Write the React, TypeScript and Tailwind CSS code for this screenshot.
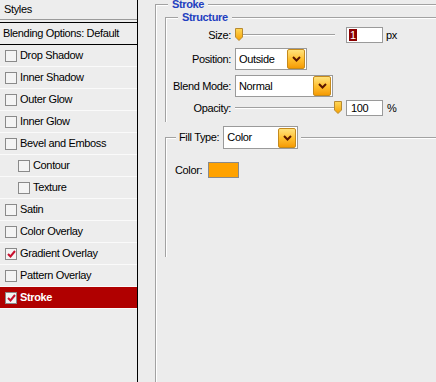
import { FC, ReactNode } from "react";

const font = { fontFamily: '"Liberation Sans", Arial, sans-serif' };

interface Row {
	label: string;
	checked?: boolean;
	indent?: boolean;
	active?: boolean;
}

const rows: Row[] = [
	{ label: "Drop Shadow" },
	{ label: "Inner Shadow" },
	{ label: "Outer Glow" },
	{ label: "Inner Glow" },
	{ label: "Bevel and Emboss" },
	{ label: "Contour", indent: true },
	{ label: "Texture", indent: true },
	{ label: "Satin" },
	{ label: "Color Overlay" },
	{ label: "Gradient Overlay", checked: true },
	{ label: "Pattern Overlay" },
	{ label: "Stroke", checked: true, active: true },
];

const Check: FC<{ checked?: boolean }> = ({ checked }) => (
	<span className="w-[12px] h-[12px] border border-[#8a8a8a] bg-[#f4f4f4] flex items-center justify-center shrink-0">
		{checked && (
			<svg width="9" height="8" viewBox="0 0 9 8">
				<path d="M1 4 L3.5 6.5 L8 1" stroke="#c8102e" strokeWidth="2" fill="none" />
			</svg>
		)}
	</span>
);

const Chevron: FC = () => (
	<span className="w-[18px] h-[20px] rounded-[2px] border border-[#c58a1c] bg-gradient-to-b from-[#ffe27a] via-[#ffc12e] to-[#f59b00] flex items-center justify-center shrink-0">
		<svg width="9" height="6" viewBox="0 0 9 6">
			<path d="M1 1 L4.5 4.5 L8 1" stroke="#5a1600" strokeWidth="2" fill="none" />
		</svg>
	</span>
);

const Select: FC<{ value: string; width: string; height?: string }> = ({ value, width, height = "h-[22px]" }) => (
	<div className={width + " " + height + " bg-white border border-[#9a9a9a] flex items-center justify-between pl-[3px] pr-[1px]"}>
		<span className="text-[11px] text-black">{value}</span>
		<Chevron />
	</div>
);

const Thumb: FC = () => (
	<svg width="8" height="13" viewBox="0 0 8 13">
		<defs>
			<linearGradient id="tg" x1="0" y1="0" x2="0" y2="1">
				<stop offset="0" stopColor="#ffd85a" />
				<stop offset="1" stopColor="#f5a000" />
			</linearGradient>
		</defs>
		<path d="M0.5 0.5 H7.5 V9 L4 12.5 L0.5 9 Z" fill="url(#tg)" stroke="#b88a30" />
	</svg>
);

const Slider: FC<{ pos: "left" | "right" }> = ({ pos }) => (
	<div className="relative w-[108px] h-[16px] flex items-center">
		<div className="w-[100px] h-[2px] border-t border-[#a0a0a0] border-b border-b-white" />
		<div className={"absolute top-[1px] " + (pos === "left" ? "left-0" : "left-[99px]")}>
			<Thumb />
		</div>
	</div>
);

const Group: FC<{ title?: string; className: string; children?: ReactNode }> = ({ title, className, children }) => (
	<div className={"relative border-t border-l border-[#a2a2a2] shadow-[inset_1px_1px_0_#fff] " + className}>
		{title && (
			<span className="absolute -top-[8px] left-[12px] px-[4px] bg-[#ececec] text-[11px] font-bold text-[#1f3fc0] leading-[14px]">
				{title}
			</span>
		)}
		{children}
	</div>
);

const App: FC = () => {
	return (
		<main className="w-[436px] h-[382px] overflow-hidden flex bg-[#ececec] text-black tracking-[-0.35px]" style={font}>
			<aside className="w-[138px] h-full border-r border-black bg-[#ededed] flex flex-col text-[11px]">
				<div className="h-[19px] pl-[4px] flex items-center">Styles</div>
				<div className="h-[4px] border-t border-[#9a9a9a] border-b border-b-black" />
				<div className="h-[21px] pl-[3px] flex items-center">Blending Options: Default</div>
				<div className="h-px bg-black" />
				{rows.map((row) => (
					<div
						key={row.label}
						className={
							"h-[22px] flex items-center gap-[3px] border-b border-[#fafafa] " +
							(row.indent ? "pl-[18px] " : "pl-[5px] ") +
							(row.active ? "bg-[#b00000] text-white font-bold border-[#b00000]" : "")
						}
					>
						<Check checked={row.checked} />
						<span>{row.label}</span>
					</div>
				))}
			</aside>
			<section className="flex-1 pl-[17px] pt-[4px] text-[11px]">
				<Group title="Stroke" className="h-[420px] pl-[9px] pt-[12px]">
					<Group title="Structure" className="h-[105px] pt-[9px]">
						<div className="flex items-center h-[16px]">
							<span className="w-[65px] text-right">Size:</span>
							<div className="ml-[4px]">
								<Slider pos="left" />
							</div>
							<div className="ml-[3px] w-[37px] h-[16px] bg-white border border-[#9a9a9a] flex items-center pl-[2px]">
								<span className="bg-[#8b0000] text-white px-px leading-[12px]">1</span>
							</div>
							<span className="ml-[3px]">px</span>
						</div>
						<div className="flex items-center mt-[5px]">
							<span className="w-[65px] text-right">Position:</span>
							<div className="ml-[4px]">
								<Select value="Outside" width="w-[72px]" />
							</div>
						</div>
						<div className="flex items-center mt-[5px]">
							<span className="w-[65px] text-right">Blend Mode:</span>
							<div className="ml-[4px]">
								<Select value="Normal" width="w-[98px]" />
							</div>
						</div>
						<div className="flex items-center h-[16px] mt-[3px]">
							<span className="w-[65px] text-right">Opacity:</span>
							<div className="ml-[4px]">
								<Slider pos="right" />
							</div>
							<div className="ml-[3px] w-[37px] h-[16px] bg-white border border-[#9a9a9a] flex items-center pl-[4px]">
								100
							</div>
							<span className="ml-[4px]">%</span>
						</div>
					</Group>
					<Group className="h-[120px] mt-[15px] pt-[24px] pl-[9px]">
						<div className="absolute -top-[12px] left-[10px] px-[3px] bg-[#ececec] flex items-center gap-[4px]">
							<span>Fill Type:</span>
							<Select value="Color" width="w-[75px]" height="h-[23px]" />
						</div>
						<div className="flex items-center gap-[6px]">
							<span>Color:</span>
							<span className="w-[31px] h-[16px] bg-[#ffa200] border border-[#8a8a8a]" />
						</div>
					</Group>
				</Group>
			</section>
		</main>
	);
};

export default App;
